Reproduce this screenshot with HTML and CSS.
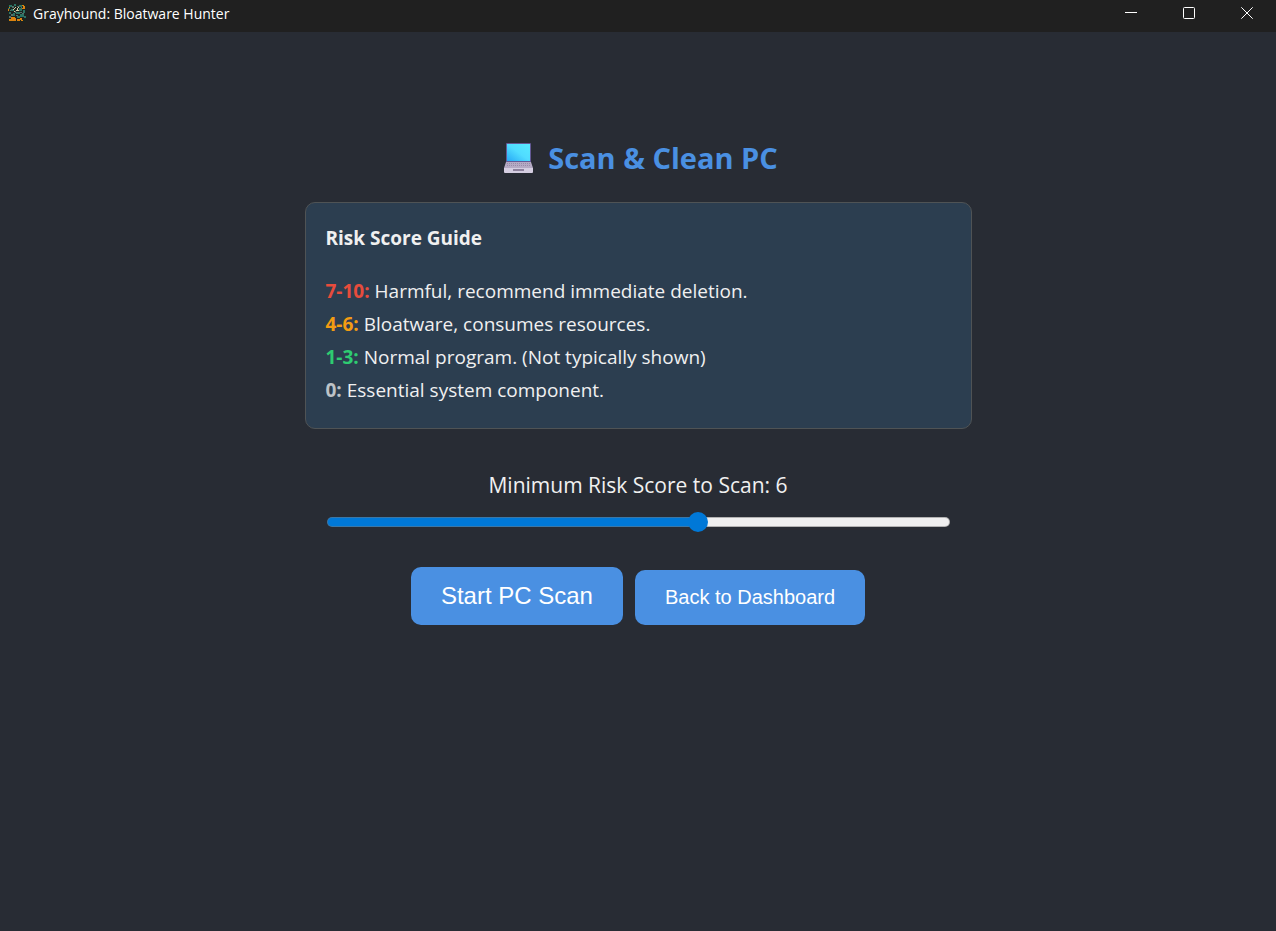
FILE: index.html
```
<!DOCTYPE html>
<html lang="en">
<head>
    <meta charset="UTF-8">
    <meta name="viewport" content="width=device-width, initial-scale=1.0">
    <title>Grayhound: Bloatware Hunter</title>
    <link rel="stylesheet" href="styles.css">
</head>
<body>
    <header class="titlebar">
        <svg class="app-icon" viewBox="0 0 18 18" shape-rendering="crispEdges" aria-hidden="true">
            <rect width="18" height="18" fill="#1b2420"/>
            <path fill="#2c7364" d="M1 1h3v2H1zM6 0h2v2H6zM11 1h3v2h-3zM0 4h2v1H0zM3 5h3v2H3zM11 4h3v3h-3zM15 6h2v3h-2zM8 8h4v2H8zM5 9h2v3H5zM12 10h4v3h-4zM1 8h2v2H1zM9 12h3v2H9zM16 12h2v2h-2z"/>
            <path fill="#56716c" d="M4 2h2v2H4zM2 6h1v1H2zM9 2h2v1H9zM13 3h1v1h-1zM3 10h2v2H3zM7 7h1v2H7zM12 8h2v1h-2zM1 12h2v2H1zM8 11h2v1H8zM14 9h2v1h-2z"/>
            <path fill="#d9cfa4" d="M7 3h1v1H7zM5 5h1v1H5zM6 4h1v1H6zM9 4h1v2H9zM10 3h1v1h-1zM8 6h2v1H8zM6 7h1v1H6zM10 6h1v1h-1z"/>
            <path fill="#dc820f" d="M14 1h2v1h-2zM15 2h2v3h-2zM14 4h2v1h-2zM0 5h1v2H0zM3 13h4v2H3zM1 15h6v2H1zM6 14h2v3H6zM9 15h3v2H9zM12 14h2v2h-2zM13 16h2v1h-2zM1 3h1v1H1z"/>
        </svg>
        <span class="app-name">Grayhound: Bloatware Hunter</span>
        <div class="window-controls">
            <button type="button" aria-label="Minimize">
                <svg width="12" height="12" viewBox="0 0 12 12"><path d="M0 5.5h12"/></svg>
            </button>
            <button type="button" aria-label="Maximize">
                <svg width="12" height="12" viewBox="0 0 12 12"><rect x="0.5" y="0.5" width="11" height="11" rx="1"/></svg>
            </button>
            <button type="button" aria-label="Close">
                <svg width="12" height="12" viewBox="0 0 12 12"><path d="M0.3 0.3l11.4 11.4M11.7 0.3L0.3 11.7"/></svg>
            </button>
        </div>
    </header>

    <main class="container">
        <h1>
            <svg class="laptop" viewBox="0 0 30 30" aria-hidden="true">
                <defs>
                    <linearGradient id="screen" x1="0" y1="1" x2="1" y2="0">
                        <stop offset="0" stop-color="#27a9f5"/>
                        <stop offset="0.5" stop-color="#50dcff"/>
                        <stop offset="1" stop-color="#58eaff"/>
                    </linearGradient>
                </defs>
                <path fill="#635994" d="M3 0h23q1 0 1 1v19H2V1q0-1 1-1z"/>
                <path fill="url(#screen)" d="M3 1h23v17H3z"/>
                <path fill="#b5aac4" d="M2 19h25l2 6H0z"/>
                <path stroke="#978ba8" stroke-dasharray="1 1" d="M3 20.5h23M3 22.5h24"/>
                <path fill="#d5cee1" d="M0 25h29v4q0 1-1 1H1q-1 0-1-1z"/>
                <path fill="#8d819c" d="M9 26h11v2H9z"/>
            </svg>
            Scan &amp; Clean PC
        </h1>

        <section class="risk-guide">
            <h2>Risk Score Guide</h2>
            <ul>
                <li><strong class="harmful">7-10:</strong> Harmful, recommend immediate deletion.</li>
                <li><strong class="bloatware">4-6:</strong> Bloatware, consumes resources.</li>
                <li><strong class="normal">1-3:</strong> Normal program. (Not typically shown)</li>
                <li><strong class="essential">0:</strong> Essential system component.</li>
            </ul>
        </section>

        <div class="slider-group">
            <label for="riskScore">Minimum Risk Score to Scan: <span id="riskValue">6</span></label>
            <input type="range" id="riskScore" min="0" max="10" value="6">
        </div>

        <div class="actions">
            <button type="button" class="btn btn-large">Start PC Scan</button>
            <button type="button" class="btn">Back to Dashboard</button>
        </div>
    </main>

    <script>
        const slider = document.getElementById('riskScore');
        const riskValue = document.getElementById('riskValue');

        function updateSlider() {
            riskValue.textContent = slider.value;
            slider.style.setProperty('--fill', slider.value * 10 + '%');
        }

        slider.addEventListener('input', updateSlider);
        updateSlider();
    </script>
</body>
</html>
```
FILE: styles.css
```
* {
    box-sizing: border-box;
}

body {
    margin: 0;
    min-height: 100vh;
    font-family: 'Segoe UI', 'Open Sans', 'Noto Sans', sans-serif;
    background-color: #282c34;
    color: #f0f0f0;
}

.titlebar {
    display: flex;
    align-items: center;
    height: 32px;
    padding-left: 8px;
    background-color: #202020;
}

.app-icon {
    width: 18px;
    height: 18px;
    margin-bottom: 6px;
}

.app-name {
    margin-left: 7px;
    padding-bottom: 4px;
    font-size: 14px;
    line-height: 20px;
    color: #fff;
}

.window-controls {
    display: flex;
    margin-left: auto;
}

.window-controls button {
    display: flex;
    align-items: center;
    justify-content: center;
    width: 58px;
    height: 32px;
    padding: 0 0 6px;
    border: none;
    background: none;
}

.window-controls svg {
    fill: none;
    stroke: #fff;
    stroke-width: 1;
}

.container {
    max-width: 707px;
    margin: 0 auto;
    padding: 106px 20px 40px;
}

h1 {
    display: flex;
    align-items: center;
    justify-content: center;
    gap: 14px;
    margin: 0 0 24px;
    font-size: 29px;
    line-height: 40px;
    color: #4a90e2;
}

.laptop {
    width: 30px;
    height: 30px;
    margin-left: 6px;
}

.risk-guide {
    padding: 20px 20px 21px;
    border: 1px solid #4f5355;
    border-radius: 10px;
    background-color: #2c3e50;
}

.risk-guide h2 {
    margin: 0 0 22px;
    font-size: 19px;
    line-height: 30px;
}

.risk-guide ul {
    margin: 0;
    padding: 0;
    list-style: none;
    font-size: 19px;
    line-height: 33px;
}

.harmful {
    color: #e74c3c;
}

.bloatware {
    color: #f39c12;
}

.normal {
    color: #2ecc71;
}

.essential {
    color: #bdc3c7;
}

.slider-group {
    margin: 40px 22px 35px;
    text-align: center;
}

.slider-group label {
    display: block;
    margin-bottom: 11px;
    font-size: 21px;
    line-height: 32px;
}

input[type="range"] {
    display: block;
    width: 100%;
    height: 20px;
    margin: 0;
    appearance: none;
    background: none;
}

input[type="range"]::-webkit-slider-runnable-track {
    height: 10px;
    border: 1px solid rgba(118, 118, 118, 0.5);
    border-radius: 5px;
    background: linear-gradient(to right, #0078d7 var(--fill), #efefef var(--fill)) border-box;
}

input[type="range"]::-webkit-slider-thumb {
    appearance: none;
    width: 20px;
    height: 20px;
    margin-top: -6px;
    border-radius: 50%;
    background-color: #0078d7;
}

.actions {
    display: flex;
    align-items: flex-end;
    justify-content: center;
    gap: 12px;
}

.btn {
    padding: 16px 30px;
    border: none;
    border-radius: 10px;
    font-family: Arial, 'Liberation Sans', sans-serif;
    font-size: 20px;
    line-height: 23px;
    color: white;
    background-color: #4a90e2;
    cursor: pointer;
}

.btn-large {
    font-size: 24px;
    line-height: 26px;
}

.btn:hover {
    background-color: #357abd;
}
```
